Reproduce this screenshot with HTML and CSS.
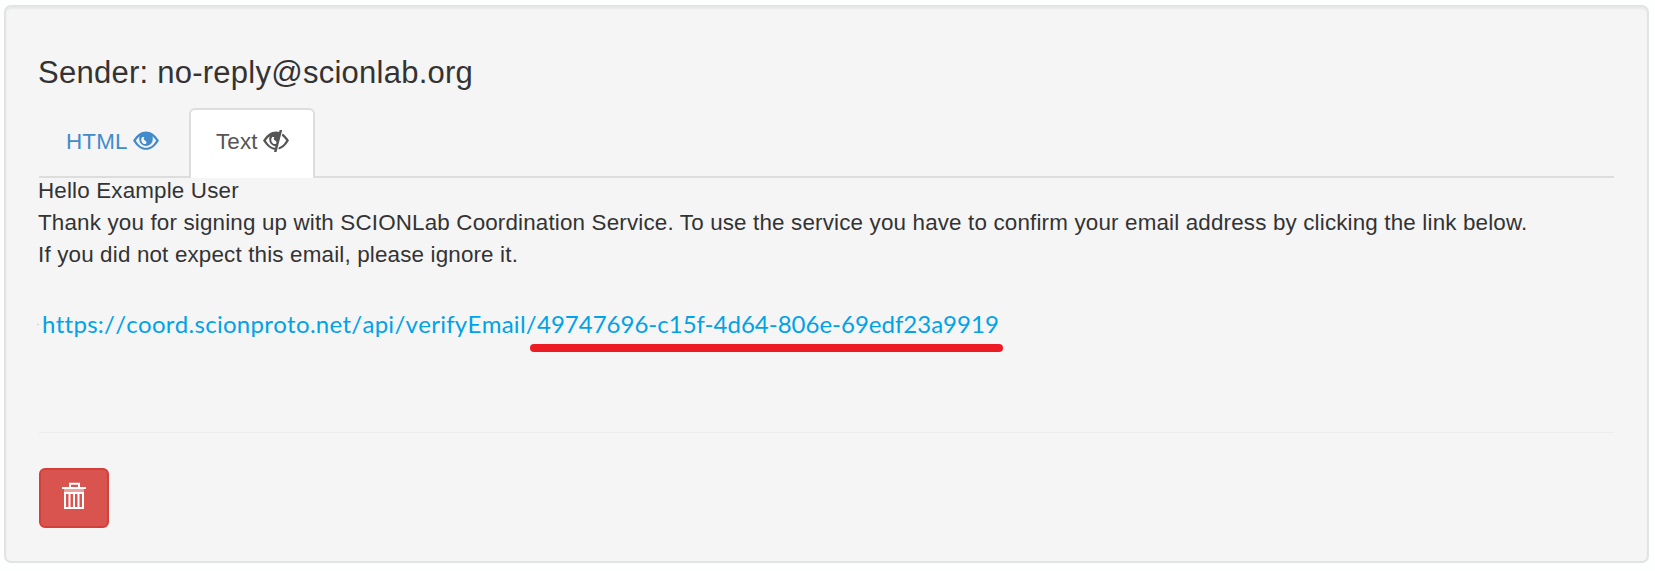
FILE: index.html
```html
<!DOCTYPE html>
<html lang="en">
<head>
<meta charset="utf-8">
<title>Mail</title>
<link rel="stylesheet" href="styles.css">
</head>
<body>
<main class="well">
  <h4 class="sender"><span>Sender: no-reply@scionlab.org</span></h4>
  <nav class="tabs">
    <a class="tab"><span>HTML</span>
      <svg class="eye" viewBox="0 0 26 22"><path fill="currentColor" fill-rule="evenodd" d="M0 10.500C4 4.500 8 1.500 13 1.500s9 3 13 9c-4 6.500-8 9.300-13 9.300S4 17 0 10.500zm2.800 0c2.800 4.800 6 7.300 10.200 7.300s7.400-2.500 10.200-7.300c-1.200-1.700-2.500-3.100-3.800-4.200.3 1 .4 2 .4 3a6.800 6.800 0 0 1-13.600 0c0-1 .1-2 .4-3-1.300 1.100-2.600 2.500-3.800 4.200zm6.400-3.500c-1.400 1.800-1.200 4.600.5 6.200 1.400 1.200 3 1.100 3.600 0 .5-1.200-.2-2-1.300-2.800-1.400-1-1.700-1.900-.6-3.400z"/></svg>
    </a>
    <a class="tab tab-active"><span>Text</span>
      <svg class="eye" viewBox="0 0 26 22"><path fill="currentColor" fill-rule="evenodd" d="M0 10.500C4 4.500 8 1.500 13 1.500c1.200 0 2.200.2 3.200.5L16.600 0h2.600L13.500 22H11l.6-2.300C7.300 19.200 3.600 16.200 0 10.500zm2.800 0c2.600 4.500 5.700 7 9.300 7.300l.4-1.600C8.900 16 6.200 13 6.200 9.300c0-1 .1-2 .4-3-1.300 1.100-2.600 2.500-3.800 4.200zm6.400-3.500c-1.400 1.800-1.200 4.600.5 6.200 1.400 1.200 3 1.100 3.600 0 .5-1.200-.2-2-1.300-2.800-1.400-1-1.700-1.900-.6-3.400z"/><path fill="currentColor" d="M19.600 3.500C21.900 5 24 7.400 26 10.500c-3.200 5.200-6.600 8.300-10.700 9.100l.6-2.300c2.900-.9 5.200-3.200 7.300-6.800-1.400-2-2.900-3.600-4.400-4.800z"/></svg>
    </a>
  </nav>
  <div class="message">
    <div>Hello Example User</div>
    <div>Thank you for signing up with SCIONLab Coordination Service. To use the service you have to confirm your email address by clicking the link below.</div>
    <div>If you did not expect this email, please ignore it.</div>
  </div>
  <p class="verify"><i class="tick"></i><a class="link">https://coord.scionproto.net/api/verifyEmail/<span class="token">49747696-c15f-4d64-806e-69edf23a9919</span></a></p>
  <hr class="rule">
  <button class="delete" aria-label="Delete">
    <svg class="trash" viewBox="0 0 24 27"><path fill="none" stroke="#fff" stroke-width="2" d="M8 5V1.800h9V5M0 6h24M3 11h18v15H3z"/><path fill="#f0a09c" d="M2 7h20v3H2z"/><path stroke="#fff" stroke-width="2" d="M3 10v16M7.500 11v14M12 11v14M16.500 11v14M21 10v16"/></svg>
  </button>
</main>
</body>
</html>
```
FILE: styles.css
```css
* { box-sizing: border-box; }
body {
  margin: 0;
  padding: 5px 6px 0 4px;
  background: #fdfefe;
  color: #333;
  font-family: "Liberation Sans", Arial, sans-serif;
}
.well {
  height: 558px;
  padding: 48px 33px 0 33px;
  border: 2px solid #e2e3e3;
  border-radius: 7px;
  background: #f5f5f5;
  box-shadow: inset 0 2px 2px rgba(0, 0, 0, .05);
}
.sender {
  margin: 0 0 0 -1px;
  height: 53px;
  font-size: 31px;
  font-weight: 400;
  line-height: 36px;
  letter-spacing: .25px;
}
.tabs {
  display: flex;
  height: 70px;
  border-bottom: 2px solid #ddd;
}
.tab {
  display: flex;
  gap: 5px;
  height: 70px;
  width: 150px;
  padding: 19px 0 0 27px;
  font-size: 22.4px;
  line-height: 30px;
  letter-spacing: .16px;
  color: #428bca;
}
.tab-active {
  width: 126px;
  padding: 17px 0 0 25px;
  border: 2px solid #ddd;
  border-bottom: 0;
  border-radius: 6px 6px 0 0;
  background: #fff;
  color: #555;
}
.eye { width: 26px; height: 22px; margin-top: 3px; }
.message {
  margin: -3px 0 0 -1px;
  font-size: 22.4px;
  line-height: 31.8px;
  letter-spacing: .163px;
  white-space: nowrap;
}
.verify {
  display: flex;
  align-items: center;
  height: 40px;
  margin: 34px 0 0 -2px;
  white-space: nowrap;
}
.tick { width: 2px; height: 1px; margin-right: 3px; background: #ccc; }
.link {
  color: #00a2e8;
  font-family: Lato, sans-serif;
  font-size: 24px;
  line-height: 40px;
  letter-spacing: .275px;
  font-kerning: none;
}
.token { position: relative; letter-spacing: 0; font-kerning: normal; }
.token::after {
  content: "";
  position: absolute;
  left: -7px;
  right: -4px;
  bottom: -14px;
  height: 8px;
  border-radius: 4px;
  background: #ed1c24;
}
.rule {
  height: 1px;
  margin: 88px 0 35px;
  border: 0;
  background: #ececec;
}
.delete {
  display: flex;
  justify-content: center;
  width: 70px;
  height: 60px;
  padding: 12px 0 0;
  border: 2px solid #d43f3a;
  border-radius: 6px;
  background: #d9534f;
}
.trash { width: 24px; height: 27px; }
```
